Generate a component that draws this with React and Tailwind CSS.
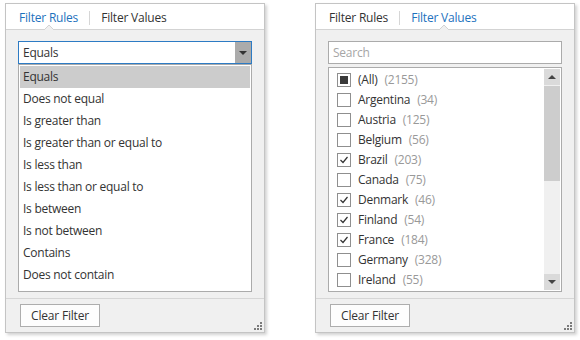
import React from 'react';

const RULES = [
  'Equals',
  'Does not equal',
  'Is greater than',
  'Is greater than or equal to',
  'Is less than',
  'Is less than or equal to',
  'Is between',
  'Is not between',
  'Contains',
  'Does not contain',
];

const VALUES = [
  { name: '(All)', count: 2155, state: 'mixed' },
  { name: 'Argentina', count: 34 },
  { name: 'Austria', count: 125 },
  { name: 'Belgium', count: 56 },
  { name: 'Brazil', count: 203, state: 'on' },
  { name: 'Canada', count: 75 },
  { name: 'Denmark', count: 46, state: 'on' },
  { name: 'Finland', count: 54, state: 'on' },
  { name: 'France', count: 184, state: 'on' },
  { name: 'Germany', count: 328 },
  { name: 'Ireland', count: 55 },
];

const font = { fontFamily: '"Open Sans", "Noto Sans", sans-serif' };

function Grip() {
  const dots = [[6, 0], [3, 3], [6, 3], [0, 6], [3, 6], [6, 6]];
  return (
    <svg width="8" height="8" className="absolute right-[2px] bottom-[2px]">
      {dots.map(([x, y], i) => (
        <rect key={i} x={x} y={y} width="2" height="2" fill="#7a7a7a" />
      ))}
    </svg>
  );
}

function Tabs({ active }) {
  const tab = (label, on) => (
    <div className={`relative h-full flex items-center pt-[2px] ${on ? 'text-[#1e72bd]' : 'text-[#333]'}`}>
      {label}
      {on && (
        <svg width="10" height="5" className="absolute left-1/2 -translate-x-1/2 -bottom-[1px]">
          <polyline points="0,5 5,0 10,5" fill="#f0f0f0" stroke="#d3d3d3" strokeWidth="1" />
        </svg>
      )}
    </div>
  );
  return (
    <div className="h-[26px] bg-white border-b border-[#d3d3d3] flex items-center pl-[13px] text-[12px] tracking-[-0.2px]">
      {tab('Filter Rules', active === 0)}
      <div className="w-px h-[14px] mt-[2px] bg-[#d6d6d6] mx-[11px]" />
      {tab('Filter Values', active === 1)}
    </div>
  );
}

function Panel({ active, children }) {
  return (
    <div className="w-[260px] h-[330px] flex flex-col border border-[#c4c4c4] bg-[#f0f0f0] shadow-[2px_2px_3px_rgba(0,0,0,0.18)]">
      <Tabs active={active} />
      <div className="h-[268px] px-3 pt-[11px] flex flex-col">{children}</div>
      <div className="relative h-[34px] border-t border-[#d6d6d6] pt-[5px] pl-[14px] flex items-start">
        <button className="w-[80px] h-[23px] border border-[#adadad] bg-[#fdfdfd] text-[12px] text-[#333] tracking-[-0.2px] leading-none">
          Clear Filter
        </button>
        <Grip />
      </div>
    </div>
  );
}

function RulesPanel() {
  return (
    <Panel active={0}>
      <div className="h-[23px] flex border border-[#2d7bc4] bg-white text-[12px] text-[#333] tracking-[-0.25px]">
        <div className="flex-1 pl-[4px] flex items-center">Equals</div>
        <div className="w-[16px] bg-[#ababab] flex items-center justify-center">
          <svg width="8" height="4"><polygon points="0,0 8,0 4,4" fill="#333" /></svg>
        </div>
      </div>
      <div className="h-[228px] border border-[#ababab] bg-white px-[1px] pt-[1px] text-[12px] text-[#333] tracking-[-0.25px]">
        {RULES.map((r, i) => (
          <div key={r} className={`h-[22px] flex items-center pl-[3px] ${i === 0 ? 'bg-[#cccccc]' : ''}`}>
            {r}
          </div>
        ))}
      </div>
    </Panel>
  );
}

function Check({ state }) {
  return (
    <div className="w-[14px] h-[14px] border border-[#8f8f8f] bg-white flex items-center justify-center">
      {state === 'mixed' && <div className="w-[8px] h-[8px] bg-[#3a3a3a]" />}
      {state === 'on' && (
        <svg width="10" height="10" viewBox="0 0 10 10">
          <polyline points="1.5,5 4,7.5 8.5,2" fill="none" stroke="#333" strokeWidth="1.2" />
        </svg>
      )}
    </div>
  );
}

function ValuesPanel() {
  return (
    <Panel active={1}>
      <div className="h-[23px] border border-[#ababab] bg-white text-[12px] text-[#a6a6a6] pl-[4px] flex items-center tracking-[-0.25px]">
        Search
      </div>
      <div className="mt-[3px] h-[225px] border border-[#ababab] bg-white flex text-[12px] tracking-[-0.25px]">
        <div className="flex-1 pt-[2px] pl-[8px]">
          {VALUES.map((v) => (
            <div key={v.name} className="h-[20px] flex items-center gap-[7px]">
              <Check state={v.state} />
              <span className="text-[#333]">
                {v.name}
                <span className="text-[#999] ml-[7px]">({v.count})</span>
              </span>
            </div>
          ))}
        </div>
        <div className="w-[16px] my-px mr-px bg-[#f0f0f0] flex flex-col">
          <div className="h-[16px] bg-[#dadada] flex items-center justify-center">
            <svg width="8" height="4"><polygon points="0,4 8,4 4,0" fill="#444" /></svg>
          </div>
          <div className="h-[95px] bg-[#cdcdcd] mt-px" />
          <div className="flex-1" />
          <div className="h-[16px] bg-[#dadada] flex items-center justify-center">
            <svg width="8" height="4"><polygon points="0,0 8,0 4,4" fill="#444" /></svg>
          </div>
        </div>
      </div>
    </Panel>
  );
}

export default function App() {
  return (
    <div className="w-[580px] h-[340px] bg-white flex gap-[50px] pt-[3px] pl-[5px]" style={font}>
      <RulesPanel />
      <ValuesPanel />
    </div>
  );
}
